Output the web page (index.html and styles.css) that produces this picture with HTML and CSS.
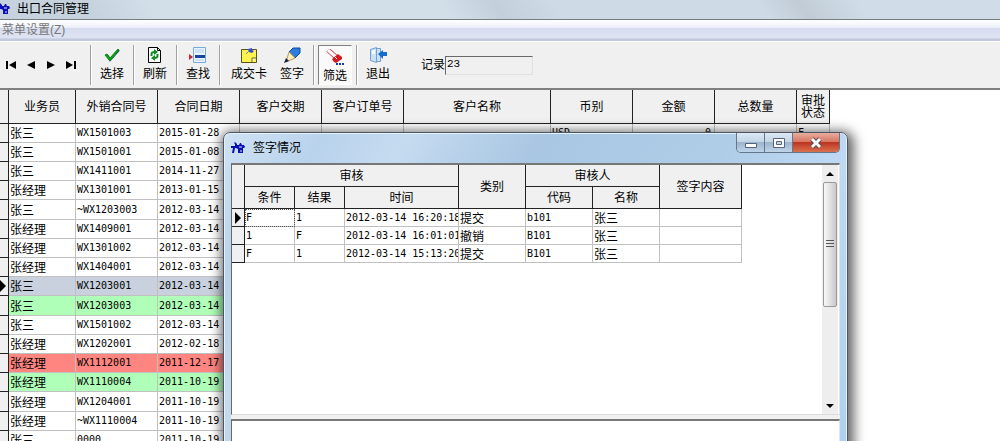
FILE: index.html
```html
<!DOCTYPE html>
<html lang="zh-CN">
<head>
<meta charset="utf-8">
<title>出口合同管理</title>
<link rel="stylesheet" href="styles.css">
</head>
<body>
<svg class="defs" aria-hidden="true">
  <symbol id="logo" viewBox="0 0 14 12">
    <path d="M0 4h4V2l-1-1 1-1 2 2v1h2l1-2h1l1 2h2l1 2-1 1h-1v5H7V7L5 6H4l-1 5H1l1-5H0z" fill="#0a10b4"/>
    <path d="M8 5h3M9 9h2" stroke="#dce6f2" stroke-width="1"/>
  </symbol>
</svg>
<div class="app">
  <header class="titlebar"><svg class="logo"><use href="#logo"/></svg><h1>出口合同管理</h1></header>
  <nav class="menubar"><button type="button">菜单设置(Z)</button></nav>
  <div class="toolbar">
    <div class="navigator">
      <button type="button" aria-label="首条"><svg viewBox="0 0 12 8"><path d="M1 0h2v8H1zM11 0v8L4 4z"/></svg></button>
      <button type="button" aria-label="上一条"><svg viewBox="0 0 12 8"><path d="M10 0v8L2 4z"/></svg></button>
      <button type="button" aria-label="下一条"><svg viewBox="0 0 12 8"><path d="M2 0v8l8-4z"/></svg></button>
      <button type="button" aria-label="末条"><svg viewBox="0 0 12 8"><path d="M1 0v8l7-4zM9 0h2v8H9z"/></svg></button>
    </div>
    <div class="group"><button type="button"><svg viewBox="0 0 16 16"><path d="M3 8l3 5 9-10" fill="none" stroke="#24309a" stroke-width="2"/><path d="M1 8l2-1 3 4 8-9 1 1-9 11z" fill="#06a80c" stroke="#0a8a12"/></svg>选择</button></div>
    <div class="group"><button type="button"><svg viewBox="0 0 16 16"><path d="M1.500.5h9l3 3v12h-12z" fill="#fff" stroke="#000"/><path d="M10.500.5v3h3" fill="none" stroke="#000"/><path d="M4.500 9V7q0-2 3-2M10.500 7v2q0 2-3 2" fill="none" stroke="#118b24" stroke-width="2"/><path d="M7 2l4 3-4 3zM8 8l-4 3 4 3z" fill="#118b24"/></svg>刷新</button></div>
    <div class="group"><button type="button"><svg class="wide" viewBox="0 0 18 16"><path d="M4.500.5h12v15h-12z" fill="#e9f4ff" stroke="#76a9dc"/><path d="M6 3h9M6 5h9M6 13h9" stroke="#b4d2ee"/><path d="M6 8h10v3H6z" fill="#1746a0"/><path d="M0 7l4 3-4 3z" fill="#d02030"/></svg>查找</button></div>
    <div class="group pair">
      <button type="button"><svg viewBox="0 0 16 16"><path d="M.5 2.500h15v13H.5z" fill="#fff34d" stroke="#55541c"/><path d="M11 15v-4h4" fill="#fff" stroke="#6c6b20"/><path d="M7 2l4-1v2l2 1-2 2-3-1z" fill="#3a48e0"/><path d="M5 7l3-3" stroke="#888"/></svg>成交卡</button>
      <button type="button"><svg class="wide" viewBox="0 0 18 16"><path d="M6 5l4-4h7v5l-5 5z" fill="#2b7de0" stroke="#104990"/><path d="M6 5l6 6-9 4z" fill="#ffeeb8" stroke="#c09850"/><path d="M1 16l2-5 3 3z" fill="#124"/></svg>签字</button>
    </div>
    <div class="group"><button type="button" class="pressed" aria-pressed="true"><svg class="wide" viewBox="0 0 18 16"><path d="M2 1l9 8" stroke="#c8505a" stroke-width="5"/><path d="M2 1l8 7" stroke="#fff" stroke-width="3"/><path d="M6 10l6-5 4 3v2l-6 4-2-1z" fill="#d71920"/><path d="M9 8l2 2" stroke="#fff"/><path d="M10 15h2M13 15h2M16 15h2" stroke="#1039c0" stroke-width="2"/></svg>筛选</button></div>
    <div class="group"><button type="button"><svg class="wide" viewBox="0 0 18 16"><path d="M1.500 2.500l6-2v15l-6-2zM7.500 1.500h4v13h-4z" fill="#c9e2fb" stroke="#739fd0"/><path d="M3 4l3-1v4l-3 0z" fill="#fff"/><path d="M9 7l5-4v2h4v4h-4v3z" fill="#176bcc"/></svg>退出</button></div>
    <label class="record">记录<input type="text" value="23" readonly></label>
  </div>
  <main class="grid">
    <table class="contracts">
      <colgroup><col class="c-mark"><col class="c-staff"><col class="c-std"><col class="c-std"><col class="c-std"><col class="c-std"><col class="c-name"><col class="c-std"><col class="c-std"><col class="c-std"><col class="c-state"></colgroup>
      <thead><tr><th></th><th>业务员</th><th>外销合同号</th><th>合同日期</th><th>客户交期</th><th>客户订单号</th><th>客户名称</th><th>币别</th><th>金额</th><th>总数量</th><th>审批状态</th></tr></thead>
      <tbody>
        <tr><th></th><td class="cn">张三</td><td>WX1501003</td><td>2015-01-28</td><td></td><td></td><td></td><td>USD</td><td class="num">0</td><td></td><td>F</td></tr>
        <tr><th></th><td class="cn">张三</td><td>WX1501001</td><td>2015-01-08</td><td></td><td></td><td></td><td></td><td></td><td></td><td></td></tr>
        <tr><th></th><td class="cn">张三</td><td>WX1411001</td><td>2014-11-27</td><td></td><td></td><td></td><td></td><td></td><td></td><td></td></tr>
        <tr><th></th><td class="cn">张经理</td><td>WX1301001</td><td>2013-01-15</td><td></td><td></td><td></td><td></td><td></td><td></td><td></td></tr>
        <tr><th></th><td class="cn">张三</td><td>~WX1203003</td><td>2012-03-14</td><td></td><td></td><td></td><td></td><td></td><td></td><td></td></tr>
        <tr><th></th><td class="cn">张经理</td><td>WX1409001</td><td>2012-03-14</td><td></td><td></td><td></td><td></td><td></td><td></td><td></td></tr>
        <tr><th></th><td class="cn">张经理</td><td>WX1301002</td><td>2012-03-14</td><td></td><td></td><td></td><td></td><td></td><td></td><td></td></tr>
        <tr><th></th><td class="cn">张经理</td><td>WX1404001</td><td>2012-03-14</td><td></td><td></td><td></td><td></td><td></td><td></td><td></td></tr>
        <tr class="current"><th><svg viewBox="0 0 6 12"><path d="M0 0l6 6-6 6z"/></svg></th><td class="cn">张三</td><td>WX1203001</td><td>2012-03-14</td><td></td><td></td><td></td><td></td><td></td><td></td><td></td></tr>
        <tr class="green"><th></th><td class="cn">张三</td><td>WX1203003</td><td>2012-03-14</td><td></td><td></td><td></td><td></td><td></td><td></td><td></td></tr>
        <tr><th></th><td class="cn">张三</td><td>WX1501002</td><td>2012-03-14</td><td></td><td></td><td></td><td></td><td></td><td></td><td></td></tr>
        <tr><th></th><td class="cn">张经理</td><td>WX1202001</td><td>2012-02-18</td><td></td><td></td><td></td><td></td><td></td><td></td><td></td></tr>
        <tr class="red"><th></th><td class="cn">张经理</td><td>WX1112001</td><td>2011-12-17</td><td></td><td></td><td></td><td></td><td></td><td></td><td></td></tr>
        <tr class="green"><th></th><td class="cn">张经理</td><td>WX1110004</td><td>2011-10-19</td><td></td><td></td><td></td><td></td><td></td><td></td><td></td></tr>
        <tr><th></th><td class="cn">张经理</td><td>WX1204001</td><td>2011-10-19</td><td></td><td></td><td></td><td></td><td></td><td></td><td></td></tr>
        <tr><th></th><td class="cn">张经理</td><td>~WX1110004</td><td>2011-10-19</td><td></td><td></td><td></td><td></td><td></td><td></td><td></td></tr>
        <tr><th></th><td class="cn">张三</td><td>0000</td><td>2011-10-19</td><td></td><td></td><td></td><td></td><td></td><td></td><td></td></tr>
      </tbody>
    </table>
  </main>
</div>

<section class="dialog" role="dialog" aria-labelledby="dlg-title">
  <header class="dialog-title">
    <svg class="logo"><use href="#logo"/></svg><h2 id="dlg-title">签字情况</h2>
    <div class="caption">
      <button type="button" aria-label="最小化"><svg viewBox="0 0 14 12"><path d="M1.500 6.500h11v4h-11z" fill="#fff" stroke="#56657c"/></svg></button>
      <button type="button" aria-label="最大化"><svg viewBox="0 0 14 12"><path d="M1.500 1.500h11v9h-11z" fill="#fff" stroke="#56657c"/><path d="M4.500 4.500h5v3h-5z" fill="#c2d4e6" stroke="#56657c"/></svg></button>
      <button type="button" class="close" aria-label="关闭"><svg viewBox="0 0 14 12"><path d="M3 2l8 8M11 2l-8 8" stroke="#5a4650" stroke-width="5"/><path d="M3 2l8 8M11 2l-8 8" stroke="#fff" stroke-width="3"/></svg></button>
    </div>
  </header>
  <div class="pane">
    <div class="sheet">
      <table class="signs">
        <colgroup><col class="s-mark"><col class="s-short"><col class="s-short"><col class="s-time"><col class="s-mid"><col class="s-mid"><col class="s-mid"><col class="s-note"></colgroup>
        <thead>
          <tr><th rowspan="2"></th><th colspan="3">审核</th><th rowspan="2">类别</th><th colspan="2">审核人</th><th rowspan="2">签字内容</th></tr>
          <tr><th>条件</th><th>结果</th><th>时间</th><th>代码</th><th>名称</th></tr>
        </thead>
        <tbody>
          <tr><th><svg viewBox="0 0 6 12"><path d="M0 0l6 6-6 6z"/></svg></th><td class="focus">F</td><td>1</td><td>2012-03-14 16:20:18</td><td class="cn">提交</td><td>b101</td><td class="cn">张三</td><td></td></tr>
          <tr><th></th><td>1</td><td>F</td><td>2012-03-14 16:01:01</td><td class="cn">撤销</td><td>B101</td><td class="cn">张三</td><td></td></tr>
          <tr><th></th><td>F</td><td>1</td><td>2012-03-14 15:13:20</td><td class="cn">提交</td><td>B101</td><td class="cn">张三</td><td></td></tr>
        </tbody>
      </table>
    </div>
    <div class="scrollbar">
      <button type="button" aria-label="向上滚动"><svg viewBox="0 0 8 4"><path d="M0 4l4-4 4 4z"/></svg></button>
      <div class="track"><div class="thumb"><svg viewBox="0 0 8 9"><path d="M0 .5h8M0 3.500h8M0 6.500h8" stroke="#555"/></svg></div></div>
      <button type="button" aria-label="向下滚动"><svg viewBox="0 0 8 4"><path d="M0 0l4 4 4-4z"/></svg></button>
    </div>
  </div>
  <div class="pane memo"></div>
</section>
</body>
</html>
```
FILE: styles.css
```css
* { box-sizing: border-box; }
body {
  margin: 0;
  height: 100vh;
  overflow: hidden;
  position: relative;
  background: #fff;
  color: #000;
  font: 12px/16px "Liberation Sans", "Noto Sans CJK SC", sans-serif;
}
button, input { font: inherit; color: inherit; border: 0; background: none; padding: 0; margin: 0; }
h1, h2 { margin: 0; font-size: 12px; font-weight: 400; }
svg { display: block; }
.defs { display: none; }
.logo { width: 14px; height: 12px; flex: none; }

.app { height: 100%; display: flex; flex-direction: column; overflow: hidden; }
.titlebar {
  display: flex; align-items: center; gap: 7px; height: 20px; flex: none;
  margin-left: -4px; padding-bottom: 2px;
  border-bottom: 1px solid #747c84;
  background: linear-gradient(55deg, #c6d3df 0 10%, #d2dee8 16% 45%, #c3cfda 50%, #cedae5 56% 76%, #c1ccd6 80%, #d0dce7 86%);
}
.menubar {
  height: 21px; flex: none; padding: 2px;
  background: linear-gradient(#fff, #eef1f9 35%, #d6dcef 40%, #dfe4f4 85%, #c3cade 90%);
  color: #777;
}
.toolbar {
  display: flex; align-items: center; height: 49px; flex: none;
  background: #f0f0f0; border-top: 1px solid #fff; border-bottom: 2px solid #808080;
}
.navigator { display: flex; width: 90px; padding-left: 5px; gap: 8px; }
.navigator svg { width: 12px; height: 8px; }
.group {
  display: flex; height: 40px; padding: 0 4px; align-items: center;
  border-left: 1px solid #a0a0a0; box-shadow: inset 1px 0 #fff;
}
.group button { display: flex; flex-direction: column; align-items: center; gap: 3px; width: 34px; height: 36px; }
.group button svg { width: 16px; height: 16px; }
.group button svg.wide { width: 18px; }
.group.pair { gap: 1px; }
.group.pair button:first-child { width: 50px; }
.group button.pressed {
  height: 40px; padding-top: 3px; background: #fafafa;
  border: 1px solid #fff; border-top-color: #808080; border-left-color: #808080;
}
.record { display: flex; align-items: center; margin-left: 22px; }
.record input {
  width: 88px; height: 19px; padding: 0 1px 2px;
  border: 1px solid #e0e0e0; border-top: 1px solid #696969; border-left: 1px solid #696969;
  font-family: "Liberation Mono", monospace; font-size: 11px;
}

table { border-collapse: separate; border-spacing: 0; table-layout: fixed; }
th, td { padding: 0; font-weight: 400; overflow: hidden; white-space: nowrap; }
th { background: #f0f0f0; border-right: 1px solid #222; border-bottom: 1px solid #222; }
thead th { white-space: normal; line-height: 12px; }
td {
  padding-left: 1px; text-align: left; line-height: 16px;
  border-right: 1px solid #c0c0c0; border-bottom: 1px solid #c0c0c0;
  font-family: "DejaVu Sans Mono", monospace; font-size: 10px;
}
td.cn { font-family: "Noto Sans CJK SC", sans-serif; font-size: 12px; }
tbody svg { width: 6px; height: 12px; }
.grid { flex: 1; overflow: hidden; }
.contracts { width: 829px; }
.contracts thead th { height: 34px; }
.contracts thead th:last-child { padding: 0 3px; }
.contracts tbody tr { height: 19px; }
.contracts tbody tr:nth-child(5n) { height: 20px; }
.contracts .num { text-align: right; padding-right: 3px; }
.c-mark { width: 9px; }
.c-staff { width: 67px; }
.c-std { width: 82px; }
.c-name { width: 147px; }
.c-state { width: 33px; }
.current td { background: #c8d1dd; }
.green td { background: #b0ffb8; }
.red td { background: #ff8680; }

.dialog {
  position: absolute; left: 223px; right: 152px; top: 132px; bottom: -20px;
  display: flex; flex-direction: column; padding: 0 7px;
  border: 1px solid #4c5560; border-radius: 7px;
  background: linear-gradient(125deg, #cfe2f3, #b9d3ec 12%, #c5dbf0 22%, #a9c6e2 38%, #b0cde8 60%, #bdd9f3 75%, #acd0f2);
  box-shadow: inset 0 0 0 1px #e5f2ff, 2px 3px 12px 4px rgba(0, 0, 0, .6);
}
.dialog-title { display: flex; align-items: center; height: 30px; gap: 8px; flex: none; }
.caption {
  display: flex; align-self: flex-start; margin-left: auto;
  border: 1px solid #65758a; border-top: 0; border-radius: 0 0 5px 5px; overflow: hidden;
}
.caption button {
  display: grid; place-items: center; width: 28px; height: 19px;
  background: linear-gradient(#dce8f4, #c2d4e6 48%, #9db5cd 50%, #bdd4e9);
  border-right: 1px solid #65758a;
}
.caption svg { width: 14px; height: 12px; }
.caption .close { width: 46px; border: 0; background: linear-gradient(#e9ad9f, #d67360 48%, #bd3523 50%, #d9714c); }
.pane { display: flex; height: 252px; flex: none; background: #fff; border: 1px solid #696969; border-top: 2px solid #777; border-bottom: 1px solid #ddd; border-right-color: #e3e3e3; }
.sheet { flex: 1; overflow: hidden; }
.memo { margin-top: 4px; flex: 1; box-shadow: 0 -4px #f0f0f0; }
.signs { width: 509px; }
.signs thead tr { height: 22px; }
.signs tbody tr { height: 18px; }
.signs tbody th svg { margin: auto; }
.s-mark { width: 13px; }
.s-short { width: 50px; }
.s-time { width: 114px; }
.s-mid { width: 67px; }
.s-note { width: 82px; }
.signs .focus { outline: 1px dotted #555; outline-offset: -1px; }
.scrollbar { display: flex; flex-direction: column; width: 17px; background: #eee; border-right: 1px solid #fff; }
.scrollbar button { display: grid; place-items: center; height: 17px; }
.scrollbar svg { width: 8px; height: 4px; }
.track { flex: 1; }
.thumb {
  display: grid; place-items: center; height: 58%; min-height: 20px; margin: 0 1px;
  border: 1px solid #999; border-radius: 2px; background: linear-gradient(90deg, #f8f8f8, #e4e4e6 45%, #c8c8ce);
}
.thumb svg { height: 9px; }
```
